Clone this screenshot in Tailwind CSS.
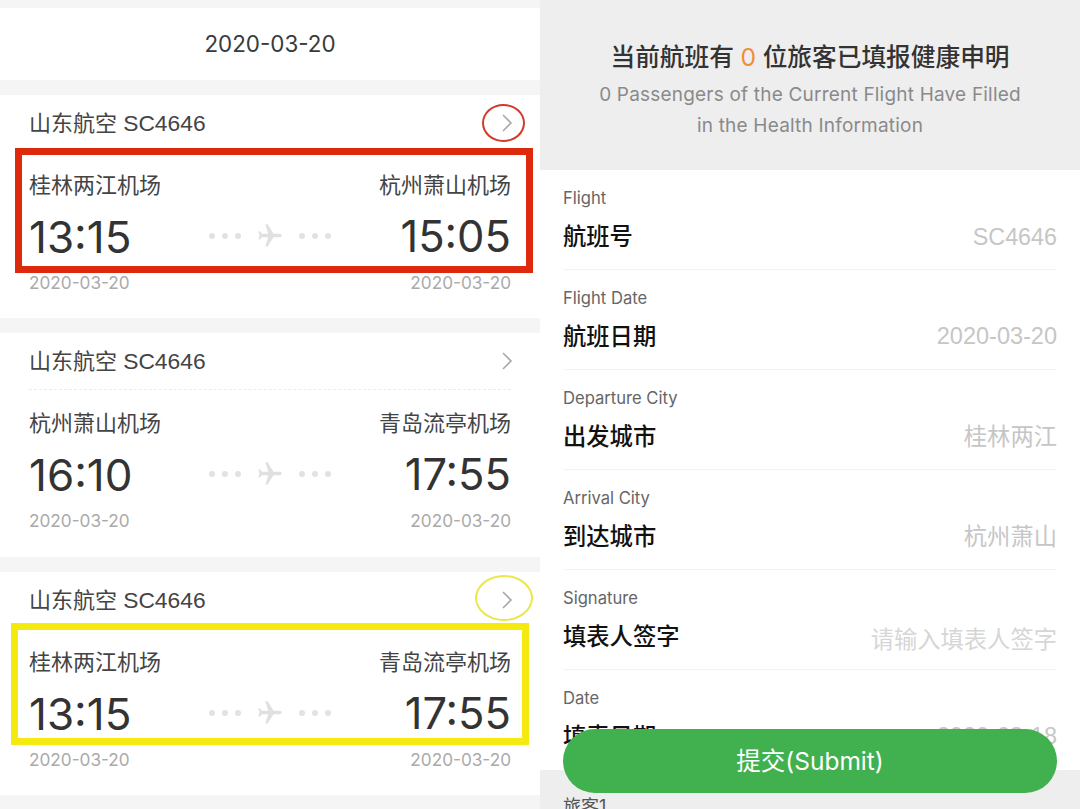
<!DOCTYPE html>
<html lang="zh-CN">
<head>
    <meta charset="UTF-8">
    <meta name="viewport" content="width=device-width, initial-scale=1.0">
    <title>健康申明</title>
    <script src="https://cdn.jsdelivr.net/npm/@tailwindcss/browser@4"></script>
</head>
<body class="w-[1080px] h-[809px] overflow-hidden bg-white text-[#333] font-['Inter','Noto_Sans_CJK_SC',sans-serif]">
<div class="flex w-[1080px] h-[809px] overflow-hidden">

    <!-- Flight list -->
    <div class="w-[540px] h-[809px] overflow-hidden bg-[#f5f5f5] pt-2 flex flex-col gap-[15px]">
        <div class="h-[72px] shrink-0 bg-white flex items-center justify-center text-[22.4px] text-[#3a3a3a]">2020-03-20</div>

        <!-- Card 1 -->
        <div class="relative h-[223px] shrink-0 bg-white px-[29px]">
            <div class="h-[57px] flex items-center justify-between border-b border-dashed border-[#ececec]">
                <span class="text-[22px] text-[#444]">山东航空 <span class="text-[22.8px] font-['Liberation_Sans',sans-serif]">SC4646</span></span>
                <svg class="w-[14px] h-[20px] mr-[-3px]" viewBox="0 0 14 20" fill="none" stroke="#aaa" stroke-width="1.6"><path d="M3 2l8 8-8 8"/></svg>
            </div>
            <div class="flex justify-between mt-[20px] text-[22px] leading-[26px] text-[#444]"><span>桂林两江机场</span><span>杭州萧山机场</span></div>
            <div class="flex justify-between items-center mt-[13px] h-[52px]">
                <span class="text-[44px] w-[130px]">13:15</span>
                <div class="flex items-center gap-[7px] -mt-[3px]">
                    <span class="w-[6px] h-[6px] rounded-full bg-[#e2e2e2]"></span><span class="w-[6px] h-[6px] rounded-full bg-[#e2e2e2]"></span><span class="w-[6px] h-[6px] rounded-full bg-[#e2e2e2]"></span>
                    <svg class="w-[28px] h-[28px] mx-[8px] mt-[1px]" viewBox="0 0 24 24" fill="#e0e0e0"><path transform="rotate(90 12 12)" d="M21 16v-2l-8-5V3.5c0-.83-.67-1.5-1.5-1.5S10 2.67 10 3.5V9l-8 5v2l8-2.5V19l-2 1.5V22l3.5-1 3.5 1v-1.5L13 19v-5.5l8 2.5z"/></svg>
                    <span class="w-[6px] h-[6px] rounded-full bg-[#e2e2e2]"></span><span class="w-[6px] h-[6px] rounded-full bg-[#e2e2e2]"></span><span class="w-[6px] h-[6px] rounded-full bg-[#e2e2e2]"></span>
                </div>
                <span class="text-[43.5px] w-[130px] text-right">15:05</span>
            </div>
            <div class="flex justify-between mt-[9px] text-[17.2px] leading-[22px] text-[#aaa]"><span>2020-03-20</span><span>2020-03-20</span></div>
            <!-- Red annotations -->
            <div class="absolute left-[15px] top-[53px] w-[518px] h-[125px] border-[7px] border-[#de2a0c]"></div>
            <div class="absolute left-[482px] top-[9px] w-[43px] h-[38px] rounded-[50%] border-[2.5px] border-[#d2392a]"></div>
        </div>

        <!-- Card 2 -->
        <div class="h-[224px] shrink-0 bg-white px-[29px]">
            <div class="h-[57px] flex items-center justify-between border-b border-dashed border-[#ececec]">
                <span class="text-[22px] text-[#444]">山东航空 <span class="text-[22.8px] font-['Liberation_Sans',sans-serif]">SC4646</span></span>
                <svg class="w-[14px] h-[20px] mr-[-3px]" viewBox="0 0 14 20" fill="none" stroke="#aaa" stroke-width="1.6"><path d="M3 2l8 8-8 8"/></svg>
            </div>
            <div class="flex justify-between mt-[20px] text-[22px] leading-[26px] text-[#444]"><span>杭州萧山机场</span><span>青岛流亭机场</span></div>
            <div class="flex justify-between items-center mt-[13px] h-[52px]">
                <span class="text-[44px] w-[130px]">16:10</span>
                <div class="flex items-center gap-[7px] -mt-[3px]">
                    <span class="w-[6px] h-[6px] rounded-full bg-[#e2e2e2]"></span><span class="w-[6px] h-[6px] rounded-full bg-[#e2e2e2]"></span><span class="w-[6px] h-[6px] rounded-full bg-[#e2e2e2]"></span>
                    <svg class="w-[28px] h-[28px] mx-[8px] mt-[1px]" viewBox="0 0 24 24" fill="#e0e0e0"><path transform="rotate(90 12 12)" d="M21 16v-2l-8-5V3.5c0-.83-.67-1.5-1.5-1.5S10 2.67 10 3.5V9l-8 5v2l8-2.5V19l-2 1.5V22l3.5-1 3.5 1v-1.5L13 19v-5.5l8 2.5z"/></svg>
                    <span class="w-[6px] h-[6px] rounded-full bg-[#e2e2e2]"></span><span class="w-[6px] h-[6px] rounded-full bg-[#e2e2e2]"></span><span class="w-[6px] h-[6px] rounded-full bg-[#e2e2e2]"></span>
                </div>
                <span class="text-[43.5px] w-[130px] text-right">17:55</span>
            </div>
            <div class="flex justify-between mt-[9px] text-[17.2px] leading-[22px] text-[#aaa]"><span>2020-03-20</span><span>2020-03-20</span></div>
        </div>

        <!-- Card 3 -->
        <div class="relative h-[223px] shrink-0 bg-white px-[29px]">
            <div class="h-[57px] flex items-center justify-between border-b border-dashed border-[#ececec]">
                <span class="text-[22px] text-[#444]">山东航空 <span class="text-[22.8px] font-['Liberation_Sans',sans-serif]">SC4646</span></span>
                <svg class="w-[14px] h-[20px] mr-[-3px]" viewBox="0 0 14 20" fill="none" stroke="#aaa" stroke-width="1.6"><path d="M3 2l8 8-8 8"/></svg>
            </div>
            <div class="flex justify-between mt-[20px] text-[22px] leading-[26px] text-[#444]"><span>桂林两江机场</span><span>青岛流亭机场</span></div>
            <div class="flex justify-between items-center mt-[13px] h-[52px]">
                <span class="text-[44px] w-[130px]">13:15</span>
                <div class="flex items-center gap-[7px] -mt-[3px]">
                    <span class="w-[6px] h-[6px] rounded-full bg-[#e2e2e2]"></span><span class="w-[6px] h-[6px] rounded-full bg-[#e2e2e2]"></span><span class="w-[6px] h-[6px] rounded-full bg-[#e2e2e2]"></span>
                    <svg class="w-[28px] h-[28px] mx-[8px] mt-[1px]" viewBox="0 0 24 24" fill="#e0e0e0"><path transform="rotate(90 12 12)" d="M21 16v-2l-8-5V3.5c0-.83-.67-1.5-1.5-1.5S10 2.67 10 3.5V9l-8 5v2l8-2.5V19l-2 1.5V22l3.5-1 3.5 1v-1.5L13 19v-5.5l8 2.5z"/></svg>
                    <span class="w-[6px] h-[6px] rounded-full bg-[#e2e2e2]"></span><span class="w-[6px] h-[6px] rounded-full bg-[#e2e2e2]"></span><span class="w-[6px] h-[6px] rounded-full bg-[#e2e2e2]"></span>
                </div>
                <span class="text-[43.5px] w-[130px] text-right">17:55</span>
            </div>
            <div class="flex justify-between mt-[9px] text-[17.2px] leading-[22px] text-[#aaa]"><span>2020-03-20</span><span>2020-03-20</span></div>
            <!-- Yellow annotations -->
            <div class="absolute left-[11px] top-[51px] w-[518px] h-[122px] border-[7px] border-[#f4ea10]"></div>
            <div class="absolute left-[475px] top-[3px] w-[58px] h-[46px] rounded-[50%] border-[2.5px] border-[#ebe64a]"></div>
        </div>
    </div>

    <!-- Health form -->
    <div class="relative w-[540px] h-[809px] overflow-hidden bg-white">
        <div class="h-[170px] bg-[#eeeeee] flex flex-col items-center pt-[41px]">
            <div class="text-[24.7px] leading-[32px] font-medium text-[#333]">当前航班有 <span class="text-[#ee8f37] font-normal">0</span> 位旅客已填报健康申明</div>
            <div class="text-[19px] leading-[31px] mt-[6px] text-[#8a8a8a] text-center tracking-[0.2px]">0 Passengers of the Current Flight Have Filled<br>in the Health Information</div>
        </div>

        <div class="px-[23px]">
            <div class="h-[100px] border-b border-[#f3f3f3] pt-[17px]">
                <div class="text-[16.6px] leading-[22px] text-[#666]">Flight</div>
                <div class="flex justify-between items-center mt-[11px] h-[34px]"><span class="text-[23.3px] font-medium text-[#111]">航班号</span><span class="text-[23.3px] text-[#c6c6c6] font-['Liberation_Sans',sans-serif]">SC4646</span></div>
            </div>
            <div class="h-[100px] border-b border-[#f3f3f3] pt-[17px]">
                <div class="text-[16.6px] leading-[22px] text-[#666]">Flight Date</div>
                <div class="flex justify-between items-center mt-[11px] h-[34px]"><span class="text-[23.3px] font-medium text-[#111]">航班日期</span><span class="text-[23.5px] text-[#c6c6c6] font-['Liberation_Sans',sans-serif]">2020-03-20</span></div>
            </div>
            <div class="h-[100px] border-b border-[#f3f3f3] pt-[17px]">
                <div class="text-[16.6px] leading-[22px] text-[#666]">Departure City</div>
                <div class="flex justify-between items-center mt-[11px] h-[34px]"><span class="text-[23.3px] font-medium text-[#111]">出发城市</span><span class="text-[23.3px] text-[#c6c6c6]">桂林两江</span></div>
            </div>
            <div class="h-[100px] border-b border-[#f3f3f3] pt-[17px]">
                <div class="text-[16.6px] leading-[22px] text-[#666]">Arrival City</div>
                <div class="flex justify-between items-center mt-[11px] h-[34px]"><span class="text-[23.3px] font-medium text-[#111]">到达城市</span><span class="text-[23.3px] text-[#c6c6c6]">杭州萧山</span></div>
            </div>
            <div class="h-[100px] border-b border-[#f3f3f3] pt-[17px]">
                <div class="text-[16.6px] leading-[22px] text-[#666]">Signature</div>
                <div class="flex justify-between items-center mt-[11px] h-[34px]"><span class="text-[23.3px] font-medium text-[#111]">填表人签字</span><span class="text-[23.3px] text-[#d6d6d6] pt-[6px]">请输入填表人签字</span></div>
            </div>
            <div class="h-[100px] pt-[17px]">
                <div class="text-[16.6px] leading-[22px] text-[#666]">Date</div>
                <div class="flex justify-between items-center mt-[11px] h-[34px]"><span class="text-[23.3px] font-medium text-[#111]">填表日期</span><span class="text-[23.5px] text-[#c6c6c6] font-['Liberation_Sans',sans-serif]">2020-03-18</span></div>
            </div>
        </div>
        <div class="h-[40px] bg-[#eeeeee] px-[23px] pt-[25px] text-[18px] leading-[24px] text-[#555]">旅客1</div>

        <!-- Floating submit button -->
        <button class="absolute left-[23px] top-[729px] w-[494px] h-[64px] rounded-full bg-[#41b04e] text-white text-[24.5px]">提交(Submit)</button>
    </div>
</div>
</body>
</html>
